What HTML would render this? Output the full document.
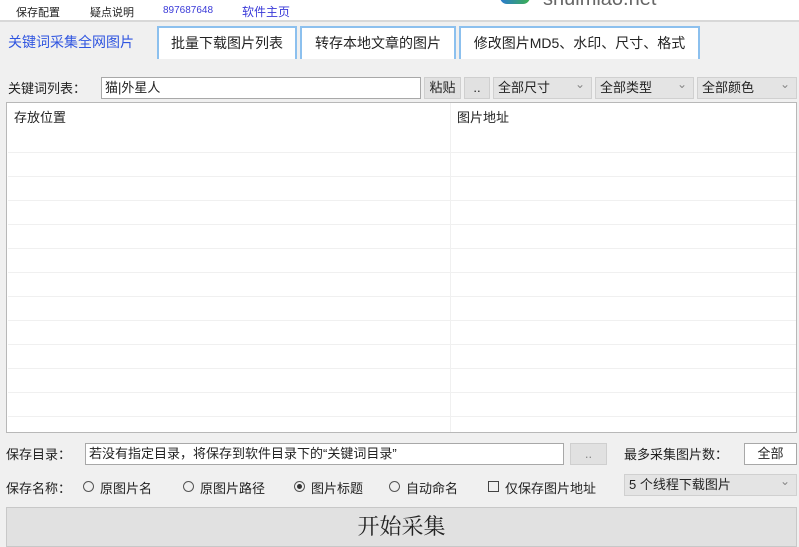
<!DOCTYPE html>
<html><head><meta charset="utf-8"><style>
*{box-sizing:border-box;margin:0;padding:0}
body{width:799px;height:543px;overflow:hidden;background:#f0f0f0;font-family:"Liberation Sans","Noto Sans CJK SC",sans-serif;font-size:13px;color:#222;position:relative}
.a{position:absolute;white-space:nowrap}
.top{left:0;top:0;width:799px;height:22px;background:#fff;border-bottom:2px solid #d8d8d8}
.tab{top:26px;height:33px;background:#fff;border:2px solid #8cc0ee;border-bottom:none;font-size:14px;line-height:30px;text-align:center}
.inp{background:#fff;border:1px solid #a8a8a8;height:22px;line-height:20px;padding-left:3px}
.btn{background:#e1e1e1;border:1px solid #cfcfcf;height:22px;line-height:20px;text-align:center}
.sel{background:#e4e4e4;border:1px solid #d0d0d0;height:22px;line-height:20px;padding-left:4px}
.sel:after{content:"⌄";position:absolute;right:6px;top:-4px;color:#888;font-size:12px}
.hl{left:8px;width:788px;height:1px;background:#f0f0f0}
.r{position:absolute;top:481px;width:11px;height:11px;border:1px solid #555;border-radius:50%}
.t{position:absolute;top:478px;white-space:nowrap}
</style></head><body>
<div class="a top"></div>
<div class="a" style="left:16px;top:4px;font-size:11px">保存配置</div>
<div class="a" style="left:90px;top:4px;font-size:11px">疑点说明</div>
<div class="a" style="left:163px;top:5px;font-size:10px;color:#3a3ad8">897687648</div>
<div class="a" style="left:242px;top:3px;font-size:12px;color:#3a3ad8">软件主页</div>
<div class="a" style="left:500px;top:-3px;width:30px;height:7px;border-radius:0 0 16px 16px;background:linear-gradient(90deg,#2a7ad0,#3cb050)"></div>
<div class="a" style="left:543px;top:-12px;font-size:20px;color:#666">shuimiao.net</div>
<div class="a" style="left:8px;top:32px;font-size:14px;color:#2f55e0">关键词采集全网图片</div>
<div class="a tab" style="left:157px;width:140px">批量下载图片列表</div>
<div class="a tab" style="left:300px;width:156px">转存本地文章的图片</div>
<div class="a tab" style="left:459px;width:241px">修改图片MD5、水印、尺寸、格式</div>
<div class="a" style="left:8px;top:78px">关键词列表：</div>
<div class="a inp" style="left:101px;top:77px;width:320px">猫|外星人</div>
<div class="a btn" style="left:424px;top:77px;width:37px">粘贴</div>
<div class="a btn" style="left:464px;top:77px;width:26px">..</div>
<div class="a sel" style="left:493px;top:77px;width:99px">全部尺寸</div>
<div class="a sel" style="left:595px;top:77px;width:99px">全部类型</div>
<div class="a sel" style="left:697px;top:77px;width:100px">全部颜色</div>
<div class="a" style="left:6px;top:102px;width:791px;height:331px;background:#fff;border:1px solid #b8b8b8"></div>
<div class="a" style="left:450px;top:103px;width:1px;height:329px;background:#f0f0f0"></div>
<div class="a" style="left:14px;top:107px">存放位置</div>
<div class="a" style="left:457px;top:107px">图片地址</div>
<div class="a hl" style="top:152px"></div><div class="a hl" style="top:176px"></div><div class="a hl" style="top:200px"></div><div class="a hl" style="top:224px"></div><div class="a hl" style="top:248px"></div><div class="a hl" style="top:272px"></div><div class="a hl" style="top:296px"></div><div class="a hl" style="top:320px"></div><div class="a hl" style="top:344px"></div><div class="a hl" style="top:368px"></div><div class="a hl" style="top:392px"></div><div class="a hl" style="top:416px"></div>
<div class="a" style="left:6px;top:444px">保存目录：</div>
<div class="a inp" style="left:85px;top:443px;width:479px">若没有指定目录，将保存到软件目录下的“关键词目录”</div>
<div class="a btn" style="left:570px;top:443px;width:37px;color:#888">..</div>
<div class="a" style="left:624px;top:444px">最多采集图片数：</div>
<div class="a inp" style="left:744px;top:443px;width:53px;text-align:center;padding:0">全部</div>
<div class="t" style="left:6px">保存名称：</div>
<div class="r" style="left:83px"></div><div class="t" style="left:100px">原图片名</div>
<div class="r" style="left:183px"></div><div class="t" style="left:200px">原图片路径</div>
<div class="r" style="left:294px"><span style="position:absolute;left:2px;top:2px;width:5px;height:5px;border-radius:50%;background:#333"></span></div><div class="t" style="left:311px">图片标题</div>
<div class="r" style="left:389px"></div><div class="t" style="left:406px">自动命名</div>
<div class="a" style="left:488px;top:481px;width:11px;height:11px;border:1px solid #444"></div><div class="t" style="left:505px">仅保存图片地址</div>
<div class="a sel" style="left:624px;top:474px;width:173px">5 个线程下载图片</div>
<div class="a" style="left:6px;top:507px;width:791px;height:40px;background:#e1e1e1;border:1px solid #c8c8c8;text-align:center;font-family:'Liberation Serif','Noto Serif CJK SC',serif;font-size:22px;line-height:38px;color:#222">开始采集</div>
</body></html>
